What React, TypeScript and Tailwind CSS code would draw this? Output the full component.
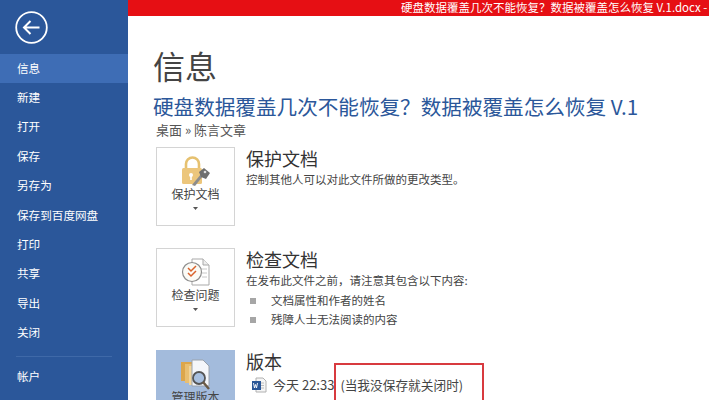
import React from "react";

const font = { fontFamily: '"Noto Sans CJK SC", "Liberation Sans", sans-serif' };
const nav = ["新建", "打开", "保存", "另存为", "保存到百度网盘", "打印", "共享", "导出", "关闭"];

function Caret() {
  return <svg width="5" height="3" viewBox="0 0 5 3" className="mt-[6px]"><path d="M0 0h5L2.5 3z" fill="#555" /></svg>;
}

function Lock() {
  return (
    <svg width="30" height="32" viewBox="0 0 30 32">
      <path d="M5 13V8a6.5 6.5 0 0 1 13 0v5" fill="none" stroke="#e6c170" strokeWidth="2.6" />
      <rect x="1" y="12" width="20" height="16" rx="1.5" fill="#ecc67c" />
      <circle cx="10" cy="19" r="2" fill="#fff" />
      <rect x="9.2" y="19" width="1.6" height="5" fill="#fff" />
      <path d="M11 29l9-11 2 2-8 10z" fill="#8d8d8d" />
      <path d="M18 16l5-4 6 5-4 6-5-2z" fill="#6f6f6f" />
      <circle cx="24" cy="16" r="1.3" fill="#ddd" />
    </svg>
  );
}

function Check() {
  return (
    <svg width="30" height="30" viewBox="0 0 30 30">
      <path d="M11 1h11l6 6v20H11z" fill="#fff" stroke="#a9a9a9" />
      <path d="M22 1v6h6" fill="#eee" stroke="#a9a9a9" />
      <path d="M20 11h6M21 15h5M21 19h5" stroke="#c8c8c8" />
      <circle cx="11" cy="14" r="9.5" fill="#fbfbf6" stroke="#8d8d8d" strokeWidth="1.2" />
      <path d="M7 10l3 3 5-5M7 15l3 3 5-5" fill="none" stroke="#d9622c" strokeWidth="1.5" />
    </svg>
  );
}

function Versions() {
  return (
    <svg width="32" height="32" viewBox="0 0 32 32">
      <rect x="1" y="3" width="12" height="19" fill="#dca64c" />
      <rect x="5" y="5" width="12" height="19" fill="#e9bf72" />
      <rect x="9" y="7" width="12" height="19" fill="#f0d49b" />
      <path d="M12 1h11l6 6v20H12z" fill="#f4f6fa" stroke="#9aa2ac" />
      <circle cx="19" cy="19" r="6" fill="#a8c0e0" stroke="#555" strokeWidth="1.8" />
      <path d="M23 23l6 7" stroke="#6b5a45" strokeWidth="2.4" />
    </svg>
  );
}

function WordIcon() {
  return (
    <svg width="16" height="16" viewBox="0 0 16 16">
      <path d="M5 1h7l3 3v11H5z" fill="#f5f5f5" stroke="#b0b0b0" />
      <path d="M9 6h4M9 8.500h4M9 11h4" stroke="#bcbcbc" />
      <rect x="1" y="4" width="9" height="9" fill="#2b5797" />
      <path d="M2.500 6l1 5 1-3.500 1 3.500 1-5" fill="none" stroke="#fff" strokeWidth=".9" />
    </svg>
  );
}

function Tile({ label, icon, active, caret = true }: { label: string; icon: React.ReactNode; active?: boolean; caret?: boolean }) {
  return (
    <div className={`w-[79px] h-[79px] shrink-0 flex flex-col items-center pt-[8px] border ${active ? "bg-[#a3bbdc] border-[#a3bbdc]" : "bg-white border-[#d4d4d4]"}`}>
      <div className="h-[32px] flex items-center justify-center">{icon}</div>
      <div className="text-[12px] leading-[14px] -mt-[1px] text-[#444]">{label}</div>
      {caret && <Caret />}
    </div>
  );
}

export default function App() {
  return (
    <div className="relative w-[709px] h-[400px] overflow-hidden flex bg-white" style={font}>
      <aside className="w-[128px] shrink-0 h-full bg-[#2b579a] text-white flex flex-col">
        <div className="h-[54px] pl-[15px] pt-[11px]">
          <svg width="33" height="33" viewBox="0 0 33 33">
            <circle cx="16.500" cy="16.500" r="15.300" fill="none" stroke="#fff" strokeWidth="1.8" />
            <path d="M9 16.500h15.500M15.500 10l-6.500 6.500 6.500 6.500" fill="none" stroke="#fff" strokeWidth="2" />
          </svg>
        </div>
        <div className="h-[29px] bg-[#3e6db5] pl-[17px] text-[11.600px] leading-[28px]">信息</div>
        {nav.map((n) => (
          <div key={n} className="h-[29.400px] pl-[17px] text-[11.600px] leading-[28.400px]">{n}</div>
        ))}
        <div className="mx-[16px] mt-[8px] border-t border-[#3f69a8]" />
        <div className="pl-[17px] text-[11.600px] leading-[27px] mt-[6px]">帐户</div>
      </aside>

      <div className="flex-1 min-w-0 flex flex-col">
        <div className="h-[16px] shrink-0 bg-[#e60f14] text-white text-[11.500px] leading-[14px] pl-[273px] whitespace-nowrap overflow-hidden">
          硬盘数据覆盖几次不能恢复？数据被覆盖怎么恢复 V.1.docx -
        </div>
        <div className="pl-[25px] pt-[21px]">
          <h1 className="text-[32px] leading-[56px] text-[#444] font-normal">信息</h1>
          <div className="text-[20.600px] leading-[29px] -mt-[1px] text-[#2b579a] whitespace-nowrap">硬盘数据覆盖几次不能恢复？数据被覆盖怎么恢复 V.1</div>
          <div className="text-[13px] leading-[18px] text-[#555] pl-[3px]">桌面 » 陈言文章</div>

          <section className="flex gap-[11px] ml-[3px] mt-[8px]">
            <Tile label="保护文档" icon={<Lock />} />
            <div>
              <div className="text-[18px] leading-[22px] text-[#333]">保护文档</div>
              <div className="text-[11.500px] leading-[20px] text-[#444]">控制其他人可以对此文件所做的更改类型。</div>
            </div>
          </section>

          <section className="flex gap-[11px] ml-[3px] mt-[22px]">
            <Tile label="检查问题" icon={<Check />} />
            <div>
              <div className="text-[18px] leading-[22px] text-[#333]">检查文档</div>
              <div className="text-[11.500px] leading-[20px] text-[#444]">在发布此文件之前，请注意其包含以下内容:</div>
              <ul className="text-[11.500px] text-[#444]">
                <li className="flex items-center h-[19px] mt-[1px]"><span className="w-[6px] h-[6px] bg-[#a6a6a6] ml-[4px] mr-[15px]" />文档属性和作者的姓名</li>
                <li className="flex items-center h-[19px]"><span className="w-[6px] h-[6px] bg-[#a6a6a6] ml-[4px] mr-[15px]" />残障人士无法阅读的内容</li>
              </ul>
            </div>
          </section>

          <section className="flex gap-[11px] ml-[3px] mt-[21px]">
            <Tile label="管理版本" icon={<Versions />} active caret={false} />
            <div>
              <div className="text-[18px] leading-[22px] text-[#333]">版本</div>
              <div className="flex items-center text-[13px] leading-[18px] text-[#444] mt-[4px] ml-[5px] whitespace-nowrap">
                <WordIcon />
                <span className="ml-[6px]">今天 22:33</span>
                <span className="ml-[6px] text-[12.700px]">(当我没保存就关闭时)</span>
              </div>
            </div>
          </section>
        </div>
      </div>
      <div className="absolute left-[334px] top-[363px] w-[150px] h-[60px] border-2 border-[#d83a3f]" />
    </div>
  );
}
